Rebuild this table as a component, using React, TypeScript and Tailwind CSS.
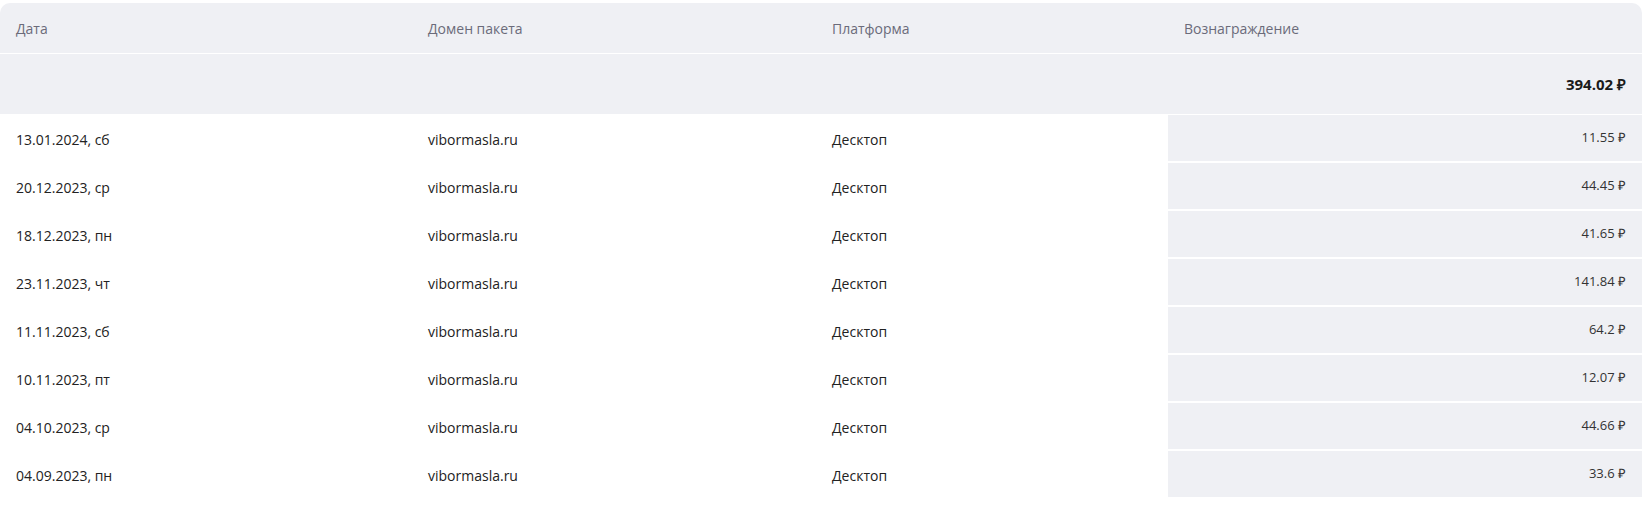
import React from 'react';

const rows = [
  { date: '13.01.2024, сб', domain: 'vibormasla.ru', platform: 'Десктоп', reward: '11.55 ₽' },
  { date: '20.12.2023, ср', domain: 'vibormasla.ru', platform: 'Десктоп', reward: '44.45 ₽' },
  { date: '18.12.2023, пн', domain: 'vibormasla.ru', platform: 'Десктоп', reward: '41.65 ₽' },
  { date: '23.11.2023, чт', domain: 'vibormasla.ru', platform: 'Десктоп', reward: '141.84 ₽' },
  { date: '11.11.2023, сб', domain: 'vibormasla.ru', platform: 'Десктоп', reward: '64.2 ₽' },
  { date: '10.11.2023, пт', domain: 'vibormasla.ru', platform: 'Десктоп', reward: '12.07 ₽' },
  { date: '04.10.2023, ср', domain: 'vibormasla.ru', platform: 'Десктоп', reward: '44.66 ₽' },
  { date: '04.09.2023, пн', domain: 'vibormasla.ru', platform: 'Десктоп', reward: '33.6 ₽' },
];

const cols = 'grid grid-cols-[412px_404px_352px_1fr]';

export default function App() {
  return (
    <div className="bg-white min-h-screen pt-[3px] font-['Open_Sans',sans-serif] text-[14px]">
      <div className="w-[1642px]">
        {/* Header */}
        <div className={`${cols} h-[51px] items-center bg-[#eff0f4] rounded-t-[10px] border-b border-white text-[#6b6b7a]`}>
          <div className="pl-4">Дата</div>
          <div className="pl-4">Домен пакета</div>
          <div className="pl-4">Платформа</div>
          <div className="pl-4">Вознаграждение</div>
        </div>

        {/* Total */}
        <div className={`${cols} h-[61px] items-center bg-[#eff0f4] border-b border-white`}>
          <div />
          <div />
          <div />
          <div className="pr-4 text-right font-bold text-[15px] text-[#1a1a1a]">394.02 ₽</div>
        </div>

        {/* Data rows */}
        {rows.map((r) => (
          <div key={r.date} className={`${cols} h-[48px] text-[#222]`}>
            <div className="pl-4 flex items-center">{r.date}</div>
            <div className="pl-4 flex items-center">{r.domain}</div>
            <div className="pl-4 flex items-center">{r.platform}</div>
            <div className="pr-4 flex items-center justify-end bg-[#eff0f4] border-b-2 border-white text-[13px] text-[#333]">
              {r.reward}
            </div>
          </div>
        ))}
      </div>
    </div>
  );
}
